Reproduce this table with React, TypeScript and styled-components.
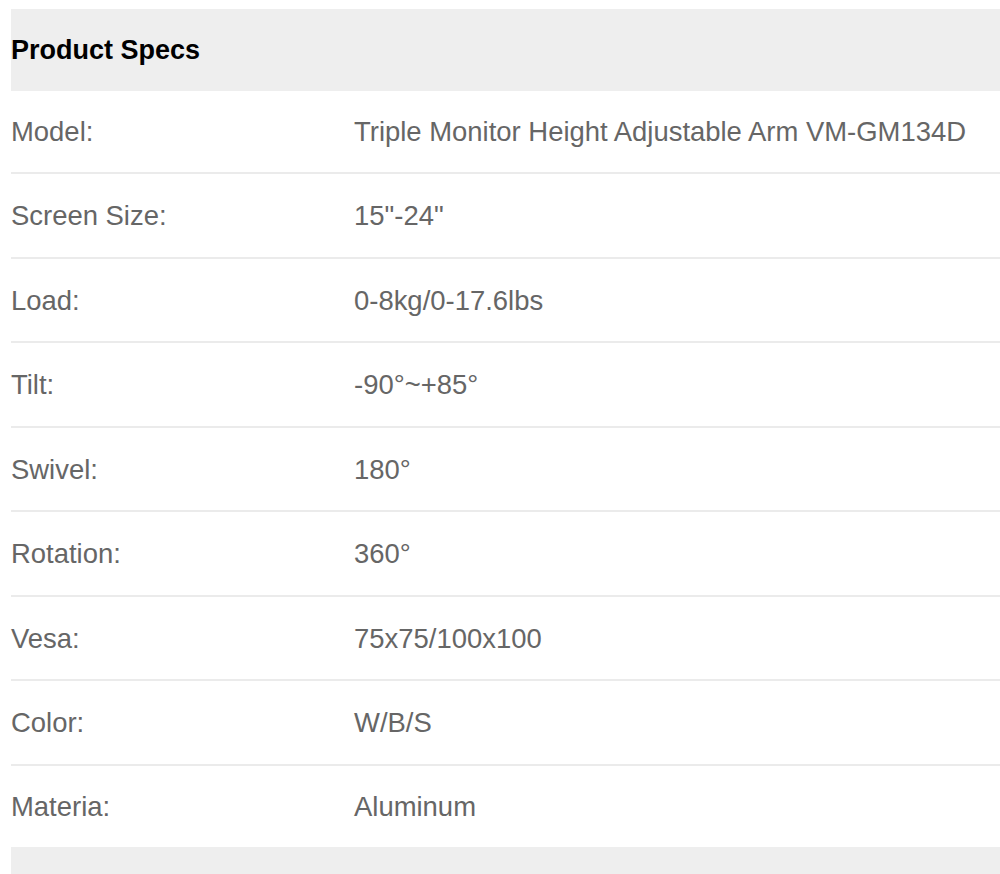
import React from "react";
import styled, { createGlobalStyle } from "styled-components";

const Global = createGlobalStyle`
  html, body { margin: 0; padding: 0; background: #fff; }
  body { font-family: "Liberation Sans", Arial, sans-serif; }
`;

const Page = styled.div`
  padding: 9px 0 0 11px;
`;

const Table = styled.div`
  display: flex;
  flex-direction: column;
`;

const Header = styled.div`
  height: 82px;
  background: #eeeeee;
  display: flex;
  align-items: center;
  font-size: 27px;
  font-weight: 700;
  color: #000;
`;

const Row = styled.div<{ $h: number; $pt: number; $last?: boolean }>`
  box-sizing: border-box;
  display: grid;
  grid-template-columns: 343px 1fr;
  align-items: center;
  height: ${(p) => p.$h}px;
  padding-top: ${(p) => p.$pt}px;
  border-bottom: ${(p) => (p.$last ? "none" : "2px solid #ebebeb")};
  font-size: 27.45px;
  color: #666;
`;

const Cell = styled.div`
  white-space: nowrap;
`;

const Footer = styled.div`
  height: 40px;
  background: #eeeeee;
`;

const specs: [string, string][] = [
  ["Model:", "Triple Monitor Height Adjustable Arm VM-GM134D"],
  ["Screen Size:", '15"-24"'],
  ["Load:", "0-8kg/0-17.6lbs"],
  ["Tilt:", "-90°~+85°"],
  ["Swivel:", "180°"],
  ["Rotation:", "360°"],
  ["Vesa:", "75x75/100x100"],
  ["Color:", "W/B/S"],
  ["Materia:", "Aluminum"],
];

export default function App() {
  return (
    <Page>
      <Global />
      <Table>
        <Header>Product Specs</Header>
        {specs.map(([k, v], i) => {
          const last = i === specs.length - 1;
          const h = i === 0 ? 83 : last ? 81.5 : 84.5;
          return (
            <Row key={k} $h={h} $pt={i === 0 ? 0 : 2} $last={last}>
              <Cell>{k}</Cell>
              <Cell>{v}</Cell>
            </Row>
          );
        })}
        <Footer />
      </Table>
    </Page>
  );
}
